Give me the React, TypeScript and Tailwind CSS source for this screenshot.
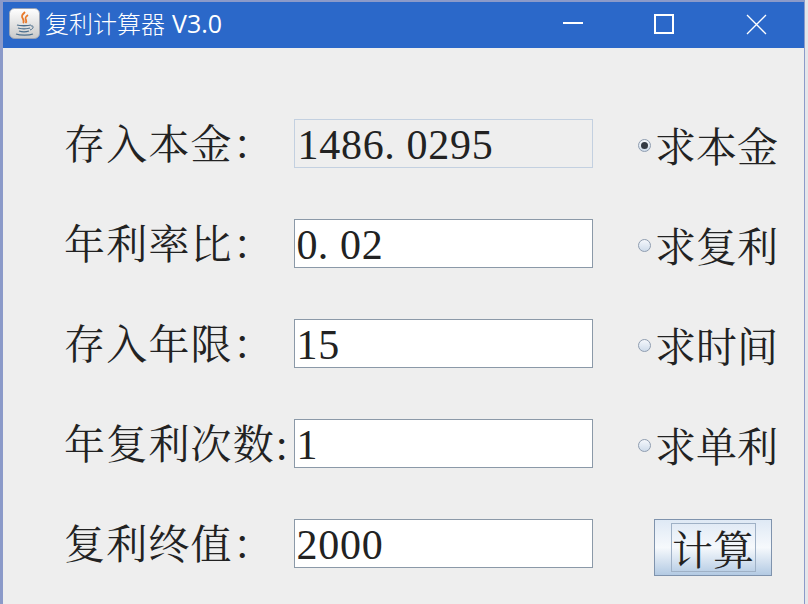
const CJK = "font-['Noto_Serif_CJK_SC','Noto_Sans_CJK_SC',serif]"

const ROWS = [
  { label: '存入本金：', value: '1486.0295', radio: '求本金', checked: true, disabled: true },
  { label: '年利率比：', value: '0.02', radio: '求复利', checked: false, disabled: false },
  { label: '存入年限：', value: '15', radio: '求时间', checked: false, disabled: false },
  { label: '年复利次数:', value: '1', radio: '求单利', checked: false, disabled: false },
  { label: '复利终值：', value: '2000', radio: null, checked: false, disabled: false },
]

function JavaIcon() {
  return (
    <svg width="31" height="31" viewBox="0 0 31 31" className="shrink-0">
      <defs>
        <linearGradient id="tile" x1="0" y1="0" x2="0" y2="1">
          <stop offset="0" stopColor="#ffffff" />
          <stop offset="1" stopColor="#c9c9c9" />
        </linearGradient>
      </defs>
      <rect x="0.5" y="0.5" width="30" height="30" rx="5" fill="url(#tile)" stroke="#9aa3b5" />
      <path d="M16 4c-3 3-4 4-2 7 1 2 1 3 0 4M19 7c-3 2-3 3-2 5 .6 1.300 .4 2-.5 3" fill="none" stroke="#e8792b" strokeWidth="1.800" />
      <path d="M8 17c3 1 11 1 14 0M9 20c3 1 9 1 12 0M10 23c3 1 7 1 10 0M7 26c4 1.500 13 1.500 17 0" fill="none" stroke="#4a6d8c" strokeWidth="1.300" />
      <path d="M22 18c3-1 3 3-1 4" fill="none" stroke="#4a6d8c" strokeWidth="1" />
    </svg>
  )
}

function CaptionButtons() {
  return (
    <div className="flex items-center">
      <svg width="24" height="24" viewBox="0 0 24 24" className="mr-[67px]">
        <path d="M2 10h20" stroke="#fff" strokeWidth="2" />
      </svg>
      <svg width="24" height="24" viewBox="0 0 24 24" className="mr-[69px]">
        <rect x="3" y="2" width="18" height="18" fill="none" stroke="#fff" strokeWidth="2" />
      </svg>
      <svg width="24" height="24" viewBox="0 0 24 24">
        <path d="M2 2l19 19M21 2L2 21" stroke="#fff" strokeWidth="1.300" />
      </svg>
    </div>
  )
}

// 宋体 digits are half-width, the dot included
function Digits({ text }: { text: string }) {
  return (
    <>
      {text.split('').map((c, i) => (
        <span key={i} className={`inline-block w-[21.8px] ${c === '.' ? 'text-left' : 'text-center'}`}>{c}</span>
      ))}
    </>
  )
}

function Radio({ checked }: { checked: boolean }) {
  return (
    <span className="mt-[5px] w-[13px] h-[13px] rounded-full border border-[#8f9db0] bg-gradient-to-b from-[#f4f7fb] to-[#cfdceb] flex items-center justify-center shrink-0">
      {checked && <span className="w-[7px] h-[7px] rounded-full bg-[#333a44]" />}
    </span>
  )
}

export default function App() {
  return (
    <div className="w-[808px] h-[604px] bg-[#e4e6ea] overflow-hidden">
      <div className={`w-[805px] h-[604px] bg-[#eeeeee] border-l-[3px] border-r-[1px] border-t-2 border-[#8b9ac9] ${CJK}`}>
        {/* Title bar */}
        <div className="h-[46px] bg-[#2b68c9] flex items-center pl-[6px] pr-[35px] pb-[4px] text-white">
          <JavaIcon />
          <span className="ml-[5px] text-[24px] leading-none font-['Noto_Sans_CJK_SC',sans-serif] font-light">复利计算器</span>
          <span className="ml-[7px] text-[25px] leading-none font-['Open_Sans',sans-serif]">V3.0</span>
          <div className="ml-auto mt-[4px]"><CaptionButtons /></div>
        </div>

        {/* Form rows */}
        <div className="pt-[70px] flex flex-col gap-[50px] text-[#222222]">
          {ROWS.map(r => (
            <div key={r.label} className="flex h-[50px] items-center pl-[61px]">
              <div className="w-[230px] shrink-0 pb-[4px] text-[41px] leading-none tracking-[1.200px] whitespace-nowrap">{r.label}</div>
              <div
                className={`w-[299px] h-[49px] shrink-0 flex items-center pt-[3px] border font-['Liberation_Serif',serif] text-[42px] leading-none ${
                  r.disabled ? 'bg-[#eeeeee] border-[#c3d0e0] pl-[2px]' : 'bg-white border-[#8b99a8] pl-[1px]'
                }`}
              >
                <Digits text={r.value} />
              </div>
              {r.radio ? (
                <div className="ml-[45px] flex items-center">
                  <Radio checked={r.checked} />
                  <span className="ml-[4px] mt-[2px] text-[41px] leading-none whitespace-nowrap">{r.radio}</span>
                </div>
              ) : (
                <button className="ml-[61px] mt-[9px] w-[118px] h-[57px] border border-[#7f93ad] bg-gradient-to-b from-[#dfe9f5] via-[#f6f9fc] to-[#b3cae3] flex items-center justify-center">
                  <span className="w-[85px] h-[49px] border border-[#9fb1c6] flex items-center justify-center text-[41px] leading-none whitespace-nowrap">计算</span>
                </button>
              )}
            </div>
          ))}
        </div>
      </div>
    </div>
  )
}
